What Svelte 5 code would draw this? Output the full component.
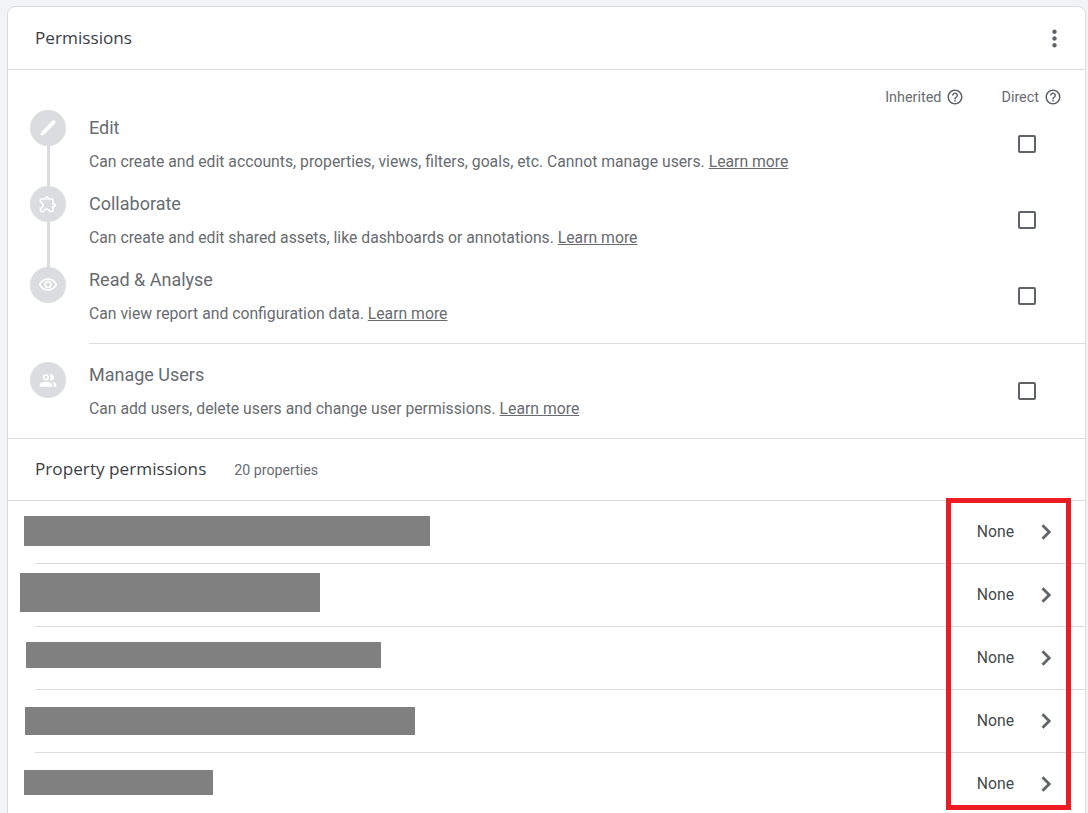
<script>
  const help = "M11 18h2v-2h-2v2zm1-16C6.48 2 2 6.48 2 12s4.48 10 10 10 10-4.48 10-10S17.52 2 12 2zm0 18c-4.41 0-8-3.59-8-8s3.59-8 8-8 8 3.59 8 8-3.59 8-8 8zm0-14c-2.21 0-4 1.79-4 4h2c0-1.1.9-2 2-2s2 .9 2 2c0 2-3 1.75-3 5h2c0-2.25 3-2.5 3-5 0-2.21-1.79-4-4-4z";

  const icons = {
    edit: "M17 3.400a2.300 2.300 0 0 1 3.300 3.300L7.800 19.400c-.5.5-1 .8-1.700 1l-2 .5c-.6.1-1.100-.4-.9-1l.5-2c.2-.6.5-1.200 1-1.700z",
    puzzle: "M10.5 4.5c.28 0 .5.22.5.5v2h6v6h2c.28 0 .5.22.5.5s-.22.5-.5.5h-2v6h-2.12c-.68-1.75-2.39-3-4.38-3s-3.7 1.25-4.38 3H4v-2.12c1.75-.68 3-2.39 3-4.38 0-1.99-1.24-3.7-2.99-4.38L4 7h6V5c0-.28.22-.5.5-.5m0-2C9.12 2.5 8 3.62 8 5H4c-1.1 0-1.99.9-1.99 2v3.8h.29c1.49 0 2.7 1.21 2.7 2.7s-1.21 2.7-2.7 2.7H2V20c0 1.1.9 2 2 2h3.8v-.3c0-1.49 1.21-2.7 2.7-2.7s2.7 1.21 2.7 2.7v.3H17c1.1 0 2-.9 2-2v-4c1.38 0 2.5-1.12 2.5-2.5S20.38 11 19 11V7c0-1.1-.9-2-2-2h-4c0-1.38-1.12-2.5-2.5-2.5z",
    eye: "M12 6c3.79 0 7.17 2.13 8.82 5.5C19.17 14.87 15.79 17 12 17s-7.17-2.13-8.82-5.5C4.83 8.13 8.21 6 12 6m0-2C7 4 2.73 7.11 1 11.5 2.73 15.89 7 19 12 19s9.27-3.11 11-7.5C21.27 7.11 17 4 12 4zm0 5c1.38 0 2.5 1.12 2.5 2.5S13.38 14 12 14s-2.5-1.12-2.5-2.5S10.62 9 12 9m0-2c-2.48 0-4.5 2.02-4.5 4.5S9.52 16 12 16s4.5-2.02 4.5-4.5S14.48 7 12 7z",
    users: "M9.500 5a3.700 3.700 0 1 1 0 7.400 3.700 3.700 0 0 1 0-7.400zm0 1.800a1.900 1.900 0 1 0 0 3.800 1.900 1.900 0 0 0 0-3.800zM15.500 5a3.700 3.700 0 0 1 0 7.400c-.5 0-1-.1-1.400-.3.7-.9 1.100-2.100 1.100-3.400s-.4-2.500-1.100-3.400c.4-.2.9-.3 1.400-.3zM9.500 14c3 0 7.500 1.300 7.500 3.600V20H2v-2.400C2 15.300 6.500 14 9.500 14zM17 14c2.500.3 5 1.500 5 3.600V20h-3.200v-2.400c0-1.500-.7-2.700-1.800-3.600z"
  };

  const roles = [
    { icon: "edit", title: "Edit", desc: "Can create and edit accounts, properties, views, filters, goals, etc. Cannot manage users.", up: false, down: true },
    { icon: "puzzle", title: "Collaborate", desc: "Can create and edit shared assets, like dashboards or annotations.", up: true, down: true },
    { icon: "eye", title: "Read & Analyse", desc: "Can view report and configuration data.", up: true, down: false, low: true }
  ];

  // grey boxes hiding the property names, page coords
  const redactions = [
    { x: 24, y: 516, w: 406, h: 30 },
    { x: 20, y: 573, w: 300, h: 39 },
    { x: 26, y: 642, w: 355, h: 26 },
    { x: 25, y: 707, w: 390, h: 28 },
    { x: 24, y: 770, w: 189, h: 25 }
  ];
</script>

{#snippet role(r)}
  <div class="role">
    <div class="step">
      <span class="stem" class:on={r.up} class:low={r.low}></span>
      <span class="circle">
        <svg viewBox="0 0 24 24" width="20" height="20"><path d={icons[r.icon]} /></svg>
      </span>
      <span class="stem grow" class:on={r.down}></span>
    </div>
    <div class="info">
      <div class="role-title">{r.title}</div>
      <div class="role-desc">{r.desc} <a href="#learn">Learn more</a></div>
    </div>
    <div class="check"><span class="box"></span></div>
  </div>
{/snippet}

<div class="page">
  <div class="card">
    <header class="head">
      <h2>Permissions</h2>
      <svg class="more" viewBox="0 0 24 24" width="27" height="27">
        <path d="M12 8c1.100 0 2-.9 2-2s-.9-2-2-2-2 .9-2 2 .9 2 2 2zm0 2c-1.100 0-2 .9-2 2s.9 2 2 2 2-.9 2-2-.9-2-2-2zm0 6c-1.100 0-2 .9-2 2s.9 2 2 2 2-.9 2-2-.9-2-2-2z" />
      </svg>
    </header>

    <section class="roles">
      <div class="columns">
        <span class="col inherited">Inherited <svg viewBox="0 0 24 24" width="18" height="18"><path d={help} /></svg></span>
        <span class="col">Direct <svg viewBox="0 0 24 24" width="18" height="18"><path d={help} /></svg></span>
      </div>
      {#each roles as r}
        {@render role(r)}
      {/each}
      <div class="rule"></div>
      {@render role({ icon: "users", title: "Manage Users", desc: "Can add users, delete users and change user permissions.", up: false, down: false, low: true })}
    </section>

    <div class="prop-head">
      <h2>Property permissions</h2>
      <span class="count">20 properties</span>
    </div>

    <div class="props">
      {#each redactions as _}
        <div class="prop">
          <span class="none">None</span>
          <svg class="chevron" viewBox="0 0 24 24" width="30" height="30"><path d="M10 6L8.590 7.410 13.170 12l-4.580 4.590L10 18l6-6z" /></svg>
        </div>
      {/each}
    </div>
  </div>

  {#each redactions as b}
    <div class="redact" style="left:{b.x}px;top:{b.y}px;width:{b.w}px;height:{b.h}px"></div>
  {/each}
  <div class="highlight"></div>
</div>

<style>
  :global(body) {
    background: #f1f3f4;
    overflow: hidden;
  }

  .page {
    position: relative;
    height: 813px;
    overflow: hidden;
    padding: 6px 2px 0 7px;
    box-sizing: border-box;
    font-family: Roboto, "Liberation Sans", sans-serif;
  }

  .card {
    background: #fff;
    border: 1px solid #dadce0;
    border-radius: 8px 8px 0 0;
  }

  .head {
    height: 62px;
    display: flex;
    align-items: center;
    justify-content: space-between;
    padding: 0 17px 0 27px;
    border-bottom: 1px solid #dadce0;
  }

  h2 {
    margin: 0;
    font-family: "Open Sans", Roboto, sans-serif;
    font-size: 17.2px;
    line-height: 22px;
    font-weight: 400;
    color: #3c4043;
  }

  .more {
    fill: #5f6368;
  }

  .roles {
    border-bottom: 1px solid #dadce0;
    padding-bottom: 9px;
  }

  .columns {
    height: 36px;
    display: flex;
    justify-content: flex-end;
    align-items: center;
    gap: 37px;
    padding: 18px 23px 0 0;
    box-sizing: border-box;
  }

  .col {
    display: flex;
    align-items: center;
    gap: 5px;
    font-size: 14.4px;
    color: #686c71;
  }

  .col svg {
    fill: #5f6368;
  }

  .role {
    height: 76px;
    display: flex;
    padding-left: 22px;
  }

  .step {
    width: 36px;
    margin-right: 23px;
    display: flex;
    flex-direction: column;
    align-items: center;
  }

  .stem {
    width: 3px;
    height: 4px;
    margin-left: 1px;
  }

  .stem.low {
    height: 9px;
  }

  .stem.grow {
    flex: 1;
  }

  .stem.on {
    background: #dadce0;
  }

  .circle {
    width: 36px;
    height: 36px;
    flex: none;
    border-radius: 50%;
    background: #dadce0;
    display: flex;
    align-items: center;
    justify-content: center;
  }

  .circle svg {
    fill: #fff;
  }

  .info {
    flex: 1;
  }

  .role-title {
    margin-top: 12px;
    font-size: 18px;
    line-height: 20px;
    color: #686c71;
  }

  .role-desc {
    margin-top: 14px;
    font-size: 15.75px;
    line-height: 20px;
    color: #686c71;
  }

  .role-desc a {
    color: #686c71;
  }

  .check {
    width: 18px;
    margin-right: 49px;
    display: flex;
    align-items: center;
  }

  .box {
    width: 18px;
    height: 18px;
    box-sizing: border-box;
    border: 2px solid #5f6368;
    border-radius: 2px;
  }

  .rule {
    margin: 9px 0 9px 81px;
    border-top: 1px solid #dadce0;
  }

  .prop-head {
    height: 62px;
    display: flex;
    align-items: center;
    gap: 28px;
    padding: 0 0 1px 27px;
    box-sizing: border-box;
    border-bottom: 1px solid #dadce0;
  }

  .count {
    margin-top: 2px;
    font-size: 14.2px;
    color: #686c71;
  }

  .prop {
    height: 62px;
    margin-left: 27px;
    display: flex;
    align-items: center;
    justify-content: flex-end;
    padding-right: 24px;
    border-bottom: 1px solid #dadce0;
  }

  .none {
    font-size: 15.75px;
    color: #45494d;
    margin: 0 17px 2px 0;
  }

  .chevron {
    fill: #5f6368;
    stroke: #5f6368;
    stroke-width: 0.3;
  }

  .redact {
    position: absolute;
    background: #808080;
  }

  .highlight {
    position: absolute;
    left: 946px;
    top: 498px;
    width: 125px;
    height: 312px;
    box-sizing: border-box;
    border: 5px solid #ed1c24;
  }
</style>
